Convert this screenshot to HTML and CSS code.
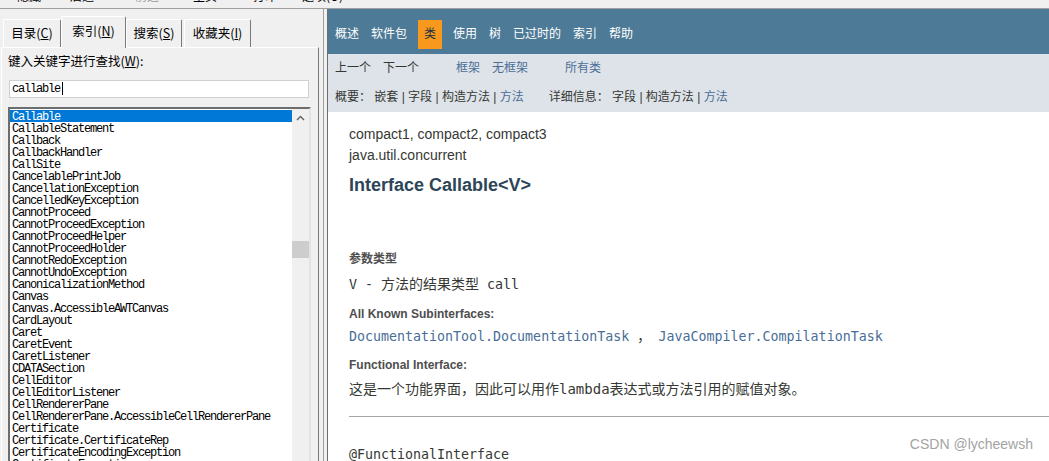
FILE: index.html
```html
<!DOCTYPE html>
<html lang="zh-CN">
<head>
    <meta charset="UTF-8">
    <meta name="viewport" content="width=device-width, initial-scale=1.0">
    <title>Callable (Java Platform SE 8)</title>
    <link rel="stylesheet" href="styles.css">
</head>

<body>
    <div class="toolbar">
        <span class="tool">隐藏</span>
        <span class="tool">后退</span>
        <span class="tool tool--off">前进</span>
        <span class="tool">主页</span>
        <span class="tool">打印</span>
        <span class="tool">选项(O)</span>
    </div>

    <div class="main">
        <!-- left: help viewer index -->
        <div class="left">
            <div class="tabs">
                <div class="tab tab--1">目录(<u>C</u>)</div>
                <div class="tab tab--active">索引(<u>N</u>)</div>
                <div class="tab tab--3">搜索(<u>S</u>)</div>
                <div class="tab tab--4">收藏夹(<u>I</u>)</div>
            </div>
            <div class="panel">
                <div class="panel-label">键入关键字进行查找(<u>W</u>):</div>
                <div class="search"><span>callable</span><span class="caret"></span></div>
                <div class="listbox">
                    <div class="items">
                        <div class="item item--selected">Callable</div>
                        <div class="item">CallableStatement</div>
                        <div class="item">Callback</div>
                        <div class="item">CallbackHandler</div>
                        <div class="item">CallSite</div>
                        <div class="item">CancelablePrintJob</div>
                        <div class="item">CancellationException</div>
                        <div class="item">CancelledKeyException</div>
                        <div class="item">CannotProceed</div>
                        <div class="item">CannotProceedException</div>
                        <div class="item">CannotProceedHelper</div>
                        <div class="item">CannotProceedHolder</div>
                        <div class="item">CannotRedoException</div>
                        <div class="item">CannotUndoException</div>
                        <div class="item">CanonicalizationMethod</div>
                        <div class="item">Canvas</div>
                        <div class="item">Canvas.AccessibleAWTCanvas</div>
                        <div class="item">CardLayout</div>
                        <div class="item">Caret</div>
                        <div class="item">CaretEvent</div>
                        <div class="item">CaretListener</div>
                        <div class="item">CDATASection</div>
                        <div class="item">CellEditor</div>
                        <div class="item">CellEditorListener</div>
                        <div class="item">CellRendererPane</div>
                        <div class="item">CellRendererPane.AccessibleCellRendererPane</div>
                        <div class="item">Certificate</div>
                        <div class="item">Certificate.CertificateRep</div>
                        <div class="item">CertificateEncodingException</div>
                        <div class="item">CertificateException</div>
                    </div>
                    <div class="scrollbar">
                        <div class="scroll-up">
                            <svg width="9" height="6" viewBox="0 0 9 6"><path d="M1 5 L4.5 1.5 L8 5" fill="none" stroke="#606060" stroke-width="1.4"/></svg>
                        </div>
                        <div class="scroll-thumb"></div>
                    </div>
                </div>
            </div>
        </div>

        <!-- right: javadoc page -->
        <div class="right">
            <div class="topnav">
                <ul class="navlist">
                    <li>概述</li>
                    <li>软件包</li>
                    <li class="current">类</li>
                    <li>使用</li>
                    <li>树</li>
                    <li>已过时的</li>
                    <li>索引</li>
                    <li>帮助</li>
                </ul>
            </div>
            <div class="subnav">
                <div class="subrow">
                    <ul class="group">
                        <li class="plain">上一个</li>
                        <li class="plain">下一个</li>
                    </ul>
                    <ul class="group">
                        <li>框架</li>
                        <li>无框架</li>
                    </ul>
                    <ul class="group">
                        <li>所有类</li>
                    </ul>
                </div>
                <div class="subrow subrow--2">
                    <div class="sublist">概要：&nbsp;嵌套&nbsp;|&nbsp;字段&nbsp;|&nbsp;构造方法&nbsp;|&nbsp;<a>方法</a></div>
                    <div class="sublist">详细信息：&nbsp;字段&nbsp;|&nbsp;构造方法&nbsp;|&nbsp;<a>方法</a></div>
                </div>
            </div>

            <div class="content">
                <div class="profile">compact1, compact2, compact3</div>
                <div class="profile">java.util.concurrent</div>
                <h2 class="title">Interface Callable&lt;V&gt;</h2>
                <dl class="details">
                    <dt class="first">参数类型</dt>
                    <dd class="code">V - <span class="cjk">方法的结果类型</span> call</dd>
                    <dt>All Known Subinterfaces:</dt>
                    <dd class="code"><a>DocumentationTool.DocumentationTask</a> ， <a>JavaCompiler.CompilationTask</a></dd>
                    <dt>Functional Interface:</dt>
                    <dd class="text">这是一个功能界面，因此可以用作<code>lambda</code>表达式或方法引用的赋值对象。</dd>
                </dl>
                <hr class="rule">
                <pre class="annotation">@FunctionalInterface</pre>
            </div>

            <div class="watermark">CSDN @lycheewsh</div>
        </div>
    </div>
</body>
</html>
```

FILE: styles.css
```css
* {
    box-sizing: border-box;
}
body {
    margin: 0;
    height: 461px;
    overflow: hidden;
    background-color: #f0f0f0;
    font-family: "Noto Sans CJK SC", sans-serif;
    font-size: 12px;
    color: #000;
}

/* top toolbar, mostly scrolled out of view */
.toolbar {
    display: flex;
    height: 9px;
    overflow: hidden;
    padding-left: 17px;
    border-bottom: 1px solid #a0a0a0;
}
.tool {
    line-height: 12px;
    margin-top: -10px;
}
.tool:nth-child(1) { width: 53px; }
.tool:nth-child(2) { width: 65px; }
.tool:nth-child(3) { width: 58px; }
.tool:nth-child(4) { width: 60px; }
.tool:nth-child(5) { width: 49px; }
.tool--off {
    color: #9a9a9a;
}

.main {
    display: flex;
    height: 452px;
}

/* left pane */
.left {
    width: 324px;
    flex-shrink: 0;
    padding: 7px 0 0 1px;
    border-right: 1px solid #a0a0a0;
}
.tabs {
    display: flex;
    align-items: flex-end;
    height: 31px;
    margin-left: 2px;
}
.tab {
    height: 28px;
    padding-top: 5px;
    line-height: 16px;
    font-size: 12.5px;
    text-align: center;
    border-top: 1px solid #fff;
    border-left: 1px solid #fff;
    border-right: 1px solid #7a7a7a;
    border-radius: 2px 2px 0 0;
}
.tab--1 { width: 58px; }
.tab--3 { width: 56px; }
.tab--4 { width: 67px; margin-left: 2px; }
.tab--active {
    width: 65px;
    height: 32px;
    padding-top: 6px;
    margin-bottom: -1px;
    background-color: #f0f0f0;
    position: relative;
    z-index: 1;
}
.panel {
    width: 318px;
    height: 420px;
    padding: 0 6px;
    border-top: 1px solid #fff;
    border-left: 1px solid #fff;
    border-right: 1px solid #7a7a7a;
}
.panel-label {
    margin-top: 5px;
    line-height: 16px;
    font-size: 12.5px;
}
.search {
    width: 300px;
    height: 18px;
    margin: 11px 0 0 1px;
    padding: 1px 0 0 2px;
    border: 1px solid #d0d0d0;
    background-color: #fff;
    font-family: "Liberation Mono", monospace;
    font-size: 12px;
    letter-spacing: -1.2px;
    line-height: 15px;
}
.caret {
    display: inline-block;
    width: 1px;
    height: 13px;
    margin-left: 2px;
    vertical-align: -3px;
    background-color: #000;
}
.listbox {
    display: flex;
    width: 303px;
    height: 360px;
    margin-top: 9px;
    border: 2px solid;
    border-color: #6d6d6d #e3e3e3 #e3e3e3 #6d6d6d;
    background-color: #fff;
    overflow: hidden;
}
.items {
    width: 282px;
    padding-top: 1px;
    font-family: "Liberation Mono", monospace;
    font-size: 12px;
    letter-spacing: -1.2px;
    line-height: 12px;
    color: #000;
}
.item {
    height: 12px;
    padding: 1px 0 0 2px;
    white-space: nowrap;
    line-height: 12px;
}
.item--selected {
    background-color: #0078d7;
    color: #fff;
}
.scrollbar {
    width: 17px;
    background-color: #f0f0f0;
}
.scroll-up {
    display: flex;
    justify-content: center;
    align-items: center;
    height: 17px;
}
.scroll-thumb {
    height: 17px;
    margin-top: 115px;
    background-color: #cdcdcd;
}

/* right pane */
.right {
    flex: 1;
    margin-left: 3px;
    border-left: 1px solid #6d6d6d;
    background-color: #fff;
    position: relative;
    font-family: "Liberation Sans", "Noto Sans CJK SC", sans-serif;
    color: #353833;
}
ul {
    list-style: none;
    margin: 0;
    padding: 0;
}
a {
    color: #4a6e96;
}
.topnav {
    height: 45px;
    padding: 11px 0 0 1px;
    background-color: #4d7a97;
}
.navlist {
    display: flex;
}
.navlist li {
    padding: 5px 6px;
    line-height: 19px;
    color: #fff;
}
.navlist .current {
    margin: 0 5px;
    background-color: #f8981d;
    color: #253441;
}
.subnav {
    height: 58px;
    padding: 5px 0 0 1px;
    background-color: #dee3e9;
}
.subrow {
    display: flex;
    line-height: 18px;
}
.group {
    display: flex;
    margin-right: 25px;
}
.group li {
    padding: 0 6px;
    color: #4a6e96;
}
.group .plain {
    color: #353833;
}
.subrow--2 {
    margin-top: 11px;
    padding-left: 6px;
}
.sublist {
    margin-right: 25px;
}

.content {
    padding: 12px 0 0 21px;
}
.profile {
    font-size: 14px;
    line-height: 21px;
}
.title {
    margin: 6px 0 0;
    font-size: 18px;
    line-height: 26px;
    color: #2c4557;
}
.details {
    margin: 0;
}
.details dt {
    margin-top: 11px;
    font-size: 12px;
    font-weight: bold;
    line-height: 16px;
    color: #4e4e4e;
}
.details dt.first {
    margin-top: 53px;
}
.details dt:nth-of-type(3) {
    margin-top: 10px;
}
.details dd {
    margin: 6px 0 0;
    line-height: 20px;
}
.details dd:nth-of-type(2) {
    margin-top: 5px;
}
.code {
    font-family: "DejaVu Sans Mono", "Noto Sans CJK SC", monospace;
    font-size: 13.3px;
    white-space: pre;
}
.code .cjk {
    font-family: "Noto Sans CJK SC", sans-serif;
    font-size: 14px;
}
.text {
    font-size: 14px;
}
.text code {
    font-family: "DejaVu Sans Mono", monospace;
    font-size: 14px;
}
.rule {
    margin: 17px 0 0;
    border: none;
    border-top: 1px solid #a6a6a6;
}
.annotation {
    margin: 28px 0 0;
    font-family: "DejaVu Sans Mono", monospace;
    font-size: 13.3px;
    line-height: 20px;
}
.watermark {
    position: absolute;
    right: 16px;
    bottom: 9px;
    font-size: 14px;
    line-height: 16px;
    color: #a3a3a3;
}
```
